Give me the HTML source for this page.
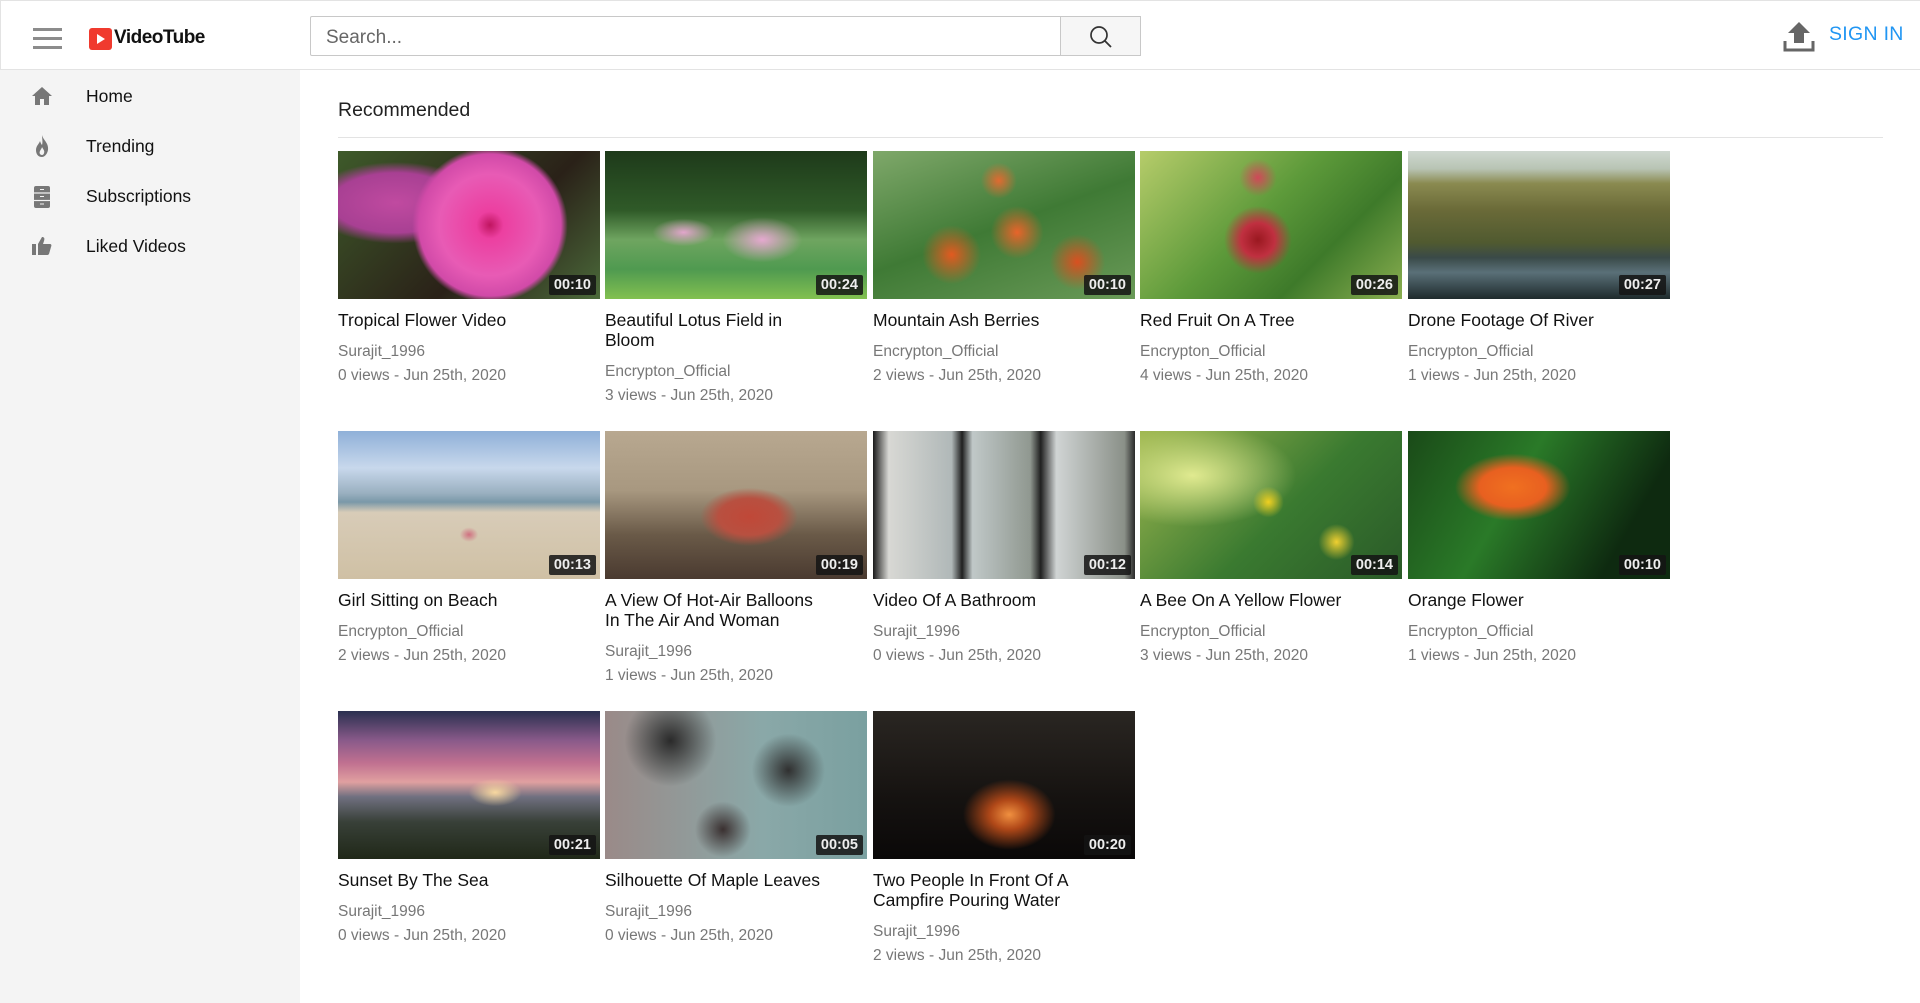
<!DOCTYPE html>
<html><head><meta charset="utf-8"><style>
*{box-sizing:border-box;margin:0;padding:0}
body{width:1920px;height:1003px;overflow:hidden;background:#fff;font-family:"Liberation Sans",sans-serif;color:#111;position:relative}
.hdr{position:absolute;left:0;top:0;width:1920px;height:70px;border:1px solid #e3e3e3;border-right:none;background:#fff}
.ham{position:absolute;left:32px;top:27px;width:29px}
.ham div{height:3px;background:#8c8c8c;margin-bottom:6px}
.logo{position:absolute;left:88px;top:27px;width:23px;height:22px;background:#f03a2e;border-radius:3px}
.logo:after{content:"";position:absolute;left:8px;top:6px;border-left:8px solid #fff;border-top:5px solid transparent;border-bottom:5px solid transparent}
.lt{position:absolute;left:113px;top:26px;font-size:19px;font-weight:bold;letter-spacing:-0.5px;color:#111}
.search{position:absolute;left:309px;top:15px;width:751px;height:40px;border:1px solid #c8c8c8;border-radius:2px 0 0 2px;font-size:19px;color:#666;padding:10px 0 0 15px}
.sbtn{position:absolute;left:1059px;top:15px;width:81px;height:40px;border:1px solid #c8c8c8;background:#f6f6f6}
.up{position:absolute;left:1782px;top:20px}
.sign{position:absolute;left:1828px;top:22px;font-size:19.5px;color:#2196f3;letter-spacing:.3px}
.side{position:absolute;left:0;top:70px;width:300px;height:933px;background:#f4f4f4}
.mi{position:absolute;left:86px;font-size:17.5px;color:#111}
.ic{position:absolute;left:31px}
.rec{position:absolute;left:338px;top:99px;font-size:19.5px;color:#222}
.line{position:absolute;left:338px;top:137px;width:1545px;height:1px;background:#e3e3e3}
.card{position:absolute;width:262px}
.th{width:262px;height:148px;position:relative;overflow:hidden}
.d{position:absolute;right:4px;bottom:4px;background:rgba(20,20,20,.85);color:#eee;font-weight:bold;font-size:14.5px;padding:2px 5px;border-radius:2px}
.t{font-size:17.5px;line-height:20px;margin-top:11px;color:#111;width:220px}
.c{font-size:15.5px;color:#777;margin-top:12px;line-height:20px}
.v{font-size:15.5px;color:#777;line-height:20px;margin-top:4px}
</style></head><body>
<div class="hdr">
<div class="ham"><div></div><div></div><div></div></div>
<div class="logo"></div><div class="lt">VideoTube</div>
<div class="search">Search...</div>
<div class="sbtn"><svg width="81" height="40"><circle cx="38" cy="18" r="8" fill="none" stroke="#333" stroke-width="1.7"/><line x1="44" y1="24" x2="50" y2="30" stroke="#333" stroke-width="1.8"/></svg></div>
<svg class="up" width="32" height="32" viewBox="0 0 32 32"><path d="M16 1 L27 12 H21 V22 H11 V12 H5 Z" fill="#666"/><path d="M2 20 V29 H30 V20" fill="none" stroke="#666" stroke-width="3"/></svg>
<div class="sign">SIGN IN</div>
</div>
<div class="side">
<svg class="ic" style="top:15px" width="22" height="22" viewBox="0 0 22 22"><path d="M11 2 L21 11 H18 V20 H13 V14 H9 V20 H4 V11 H1 Z" fill="#777"/></svg>
<div class="mi" style="top:16px">Home</div>
<svg class="ic" style="top:64px" width="22" height="24" viewBox="0 0 22 24"><path d="M11 1 C12 6 18 9 17 16 C16 21 13 23 11 23 C7 23 5 20 5 16 C5 12 8 10 9 7 C10 10 11 11 11 11 C12 8 11 4 11 1Z M11 21 C9 21 8 19 9 17 C10 15 11 14 11 13 C12 15 14 17 13 19 C13 20 12 21 11 21Z" fill="#777" fill-rule="evenodd"/></svg>
<div class="mi" style="top:66px">Trending</div>
<svg class="ic" style="top:115px" width="22" height="24" viewBox="0 0 22 24"><rect x="3" y="1" width="16" height="22" rx="2" fill="#777"/><line x1="3" y1="8" x2="19" y2="8" stroke="#f4f4f4" stroke-width="1.2"/><line x1="3" y1="15.5" x2="19" y2="15.5" stroke="#f4f4f4" stroke-width="1.2"/><path d="M9 4.5h4M9 11.5h4M9 19h4" stroke="#f4f4f4" stroke-width="1"/></svg>
<div class="mi" style="top:116px">Subscriptions</div>
<svg class="ic" style="top:165px" width="22" height="22" viewBox="0 0 22 22"><rect x="1" y="9" width="4" height="11" fill="#777"/><path d="M7 9 L11 2 C13 2 14 3 13 6 L12 9 H19 C20 9 21 10 20 12 L18 19 C17 20 17 20 15 20 H7Z" fill="#777"/></svg>
<div class="mi" style="top:166px">Liked Videos</div>
</div>
<div class="rec">Recommended</div>
<div class="line"></div>

<div class="card" style="left:338px;top:151px"><div class="th" style="background:radial-gradient(circle at 58% 50%,#c01560 0,#ec3fa0 8%,#e85bb5 30%,#d14aa8 42%,transparent 46%),radial-gradient(ellipse at 22% 35%,#c04aa0 0,#a84093 22%,transparent 30%),linear-gradient(135deg,#3e5a2a,#2a2118 60%,#4b6a3a)"><span class="d">00:10</span></div><div class="t">Tropical Flower Video</div><div class="c">Surajit_1996</div><div class="v">0 views - Jun 25th, 2020</div></div>
<div class="card" style="left:605px;top:151px"><div class="th" style="background:radial-gradient(ellipse at 60% 60%,#e5a8d0 0,transparent 18%),radial-gradient(ellipse at 30% 55%,#e2a6cc 0,transparent 12%),linear-gradient(180deg,#1e3a1a 0,#2f5a28 40%,#6fa560 60%,#4f9a50 80%,#82c050 100%)"><span class="d">00:24</span></div><div class="t">Beautiful Lotus Field in Bloom</div><div class="c">Encrypton_Official</div><div class="v">3 views - Jun 25th, 2020</div></div>
<div class="card" style="left:873px;top:151px"><div class="th" style="background:radial-gradient(circle at 30% 70%,#e25a20 0,transparent 14%),radial-gradient(circle at 55% 55%,#e8642a 0,transparent 16%),radial-gradient(circle at 78% 75%,#d95020 0,transparent 12%),radial-gradient(circle at 48% 20%,#e06a30 0,transparent 10%),linear-gradient(160deg,#7fa86a,#3f7a35 50%,#6a9a58)"><span class="d">00:10</span></div><div class="t">Mountain Ash Berries</div><div class="c">Encrypton_Official</div><div class="v">2 views - Jun 25th, 2020</div></div>
<div class="card" style="left:1140px;top:151px"><div class="th" style="background:radial-gradient(circle at 45% 60%,#9a1820 0,#c03040 10%,transparent 20%),radial-gradient(circle at 45% 18%,#d04858 0,transparent 10%),linear-gradient(135deg,#b6cc6a,#5d9a3a 45%,#3e7a2a 70%,#8aae50)"><span class="d">00:26</span></div><div class="t">Red Fruit On A Tree</div><div class="c">Encrypton_Official</div><div class="v">4 views - Jun 25th, 2020</div></div>
<div class="card" style="left:1408px;top:151px"><div class="th" style="background:linear-gradient(180deg,#cfd8d0 0,#b8c4b4 12%,#8a8a50 22%,#6a6a38 40%,#505a30 62%,#3a4a48 72%,#5a7078 82%,#1e2a2c 100%)"><span class="d">00:27</span></div><div class="t">Drone Footage Of River</div><div class="c">Encrypton_Official</div><div class="v">1 views - Jun 25th, 2020</div></div>

<div class="card" style="left:338px;top:431px"><div class="th" style="background:radial-gradient(ellipse at 50% 70%,#d07080 0,transparent 5%),linear-gradient(180deg,#8fb0d8 0,#c8d8ec 25%,#9ab0c0 42%,#7a98a8 48%,#d8ccb8 55%,#cfc0a4 100%)"><span class="d">00:13</span></div><div class="t">Girl Sitting on Beach</div><div class="c">Encrypton_Official</div><div class="v">2 views - Jun 25th, 2020</div></div>
<div class="card" style="left:605px;top:431px"><div class="th" style="background:radial-gradient(ellipse at 55% 58%,#c04838 0,#b85040 15%,transparent 24%),linear-gradient(180deg,#b8a890 0,#a89880 40%,#6a5a48 70%,#4a3a30 100%)"><span class="d">00:19</span></div><div class="t">A View Of Hot-Air Balloons In The Air And Woman</div><div class="c">Surajit_1996</div><div class="v">1 views - Jun 25th, 2020</div></div>
<div class="card" style="left:873px;top:431px"><div class="th" style="background:linear-gradient(90deg,#1a1a1a 0,#d8d8d4 6%,#b0b8b8 30%,#202020 34%,#c0c8c8 38%,#909890 60%,#202020 64%,#d0d4d4 70%,#8a9088 96%,#2a2a2a 100%),#ccc"><span class="d">00:12</span></div><div class="t">Video Of A Bathroom</div><div class="c">Surajit_1996</div><div class="v">0 views - Jun 25th, 2020</div></div>
<div class="card" style="left:1140px;top:431px"><div class="th" style="background:radial-gradient(circle at 49% 48%,#f0d020 0,transparent 10%),radial-gradient(circle at 75% 75%,#f0d030 0,transparent 8%),radial-gradient(ellipse at 20% 30%,#e0ea90 0,transparent 35%),linear-gradient(135deg,#a0b850,#3a7a30 55%,#2a5a28)"><span class="d">00:14</span></div><div class="t">A Bee On A Yellow Flower</div><div class="c">Encrypton_Official</div><div class="v">3 views - Jun 25th, 2020</div></div>
<div class="card" style="left:1408px;top:431px"><div class="th" style="background:radial-gradient(ellipse at 40% 38%,#f07020 0,#e86020 15%,transparent 26%),linear-gradient(120deg,#1a4a18,#2a7a28 40%,#0e2a10 80%)"><span class="d">00:10</span></div><div class="t">Orange Flower</div><div class="c">Encrypton_Official</div><div class="v">1 views - Jun 25th, 2020</div></div>

<div class="card" style="left:338px;top:711px"><div class="th" style="background:radial-gradient(ellipse at 60% 55%,#f8d8a0 0,transparent 12%),linear-gradient(180deg,#2a3050 0,#8a5a8a 20%,#c07090 35%,#e0a0a0 48%,#707080 58%,#384038 75%,#202818 100%)"><span class="d">00:21</span></div><div class="t">Sunset By The Sea</div><div class="c">Surajit_1996</div><div class="v">0 views - Jun 25th, 2020</div></div>
<div class="card" style="left:605px;top:711px"><div class="th" style="background:radial-gradient(circle at 25% 20%,#2a2a2a 0,transparent 20%),radial-gradient(circle at 70% 40%,#303030 0,transparent 18%),radial-gradient(circle at 45% 80%,#3a3030 0,transparent 15%),linear-gradient(90deg,#9a8a88,#8aa8a8 60%,#7aa0a0)"><span class="d">00:05</span></div><div class="t">Silhouette Of Maple Leaves</div><div class="c">Surajit_1996</div><div class="v">0 views - Jun 25th, 2020</div></div>
<div class="card" style="left:873px;top:711px"><div class="th" style="background:radial-gradient(ellipse at 52% 70%,#f09040 0,#b04818 10%,transparent 24%),linear-gradient(180deg,#2a2622,#151210 60%,#0a0808)"><span class="d">00:20</span></div><div class="t">Two People In Front Of A Campfire Pouring Water</div><div class="c">Surajit_1996</div><div class="v">2 views - Jun 25th, 2020</div></div>
</body></html>
